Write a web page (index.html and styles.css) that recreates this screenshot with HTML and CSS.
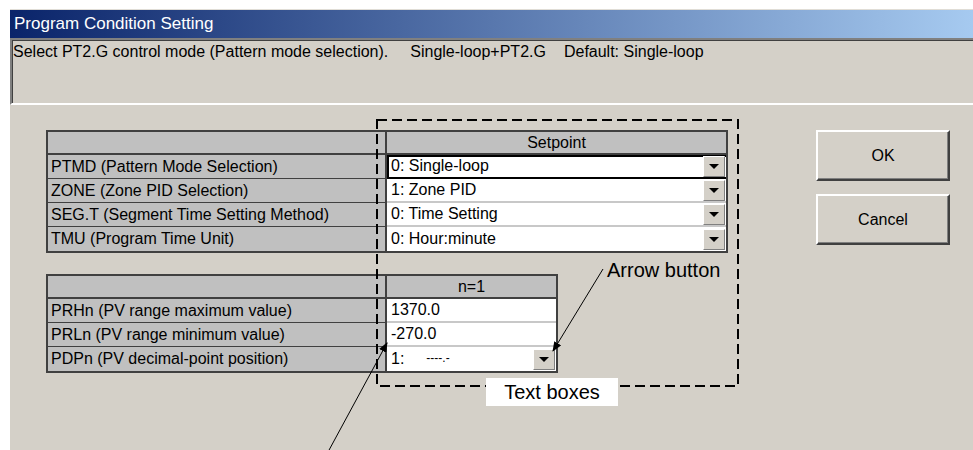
FILE: index.html
```html
<!DOCTYPE html>
<html>
<head>
<meta charset="utf-8">
<link rel="stylesheet" href="styles.css">
</head>
<body>
<div class="dialog">
  <div class="titlebar">Program Condition Setting</div>
  <div class="message"><span>Select PT2.G control mode (Pattern mode selection).</span><span class="m2">Single-loop+PT2.G</span><span class="m3">Default: Single-loop</span></div>
  <div class="content">
    <div class="tables">
      <div class="grid g1">
        <div class="cell head"></div>
        <div class="cell head center">Setpoint</div>
        <div class="cell label">PTMD (Pattern Mode Selection)</div>
        <div class="cell value focus"><span>0: Single-loop</span><span class="drop"><i class="tri"></i></span></div>
        <div class="cell label">ZONE (Zone PID Selection)</div>
        <div class="cell value"><span>1: Zone PID</span><span class="drop"><i class="tri"></i></span></div>
        <div class="cell label">SEG.T (Segment Time Setting Method)</div>
        <div class="cell value"><span>0: Time Setting</span><span class="drop"><i class="tri"></i></span></div>
        <div class="cell label last">TMU (Program Time Unit)</div>
        <div class="cell value last"><span>0: Hour:minute</span><span class="drop"><i class="tri"></i></span></div>
      </div>
      <div class="grid g2">
        <div class="cell head"></div>
        <div class="cell head center">n=1</div>
        <div class="cell label">PRHn (PV range maximum value)</div>
        <div class="cell value"><span>1370.0</span></div>
        <div class="cell label">PRLn (PV range minimum value)</div>
        <div class="cell value"><span>-270.0</span></div>
        <div class="cell label last">PDPn (PV decimal-point position)</div>
        <div class="cell value last"><span>1:<span class="dp">----.-</span></span><span class="drop"><i class="tri"></i></span></div>
      </div>
    </div>
    <div class="buttons">
      <div class="btn">OK</div>
      <div class="btn">Cancel</div>
    </div>
  </div>
</div>
<svg class="overlay" width="973" height="450" viewBox="0 0 973 450">
  <defs>
    <marker id="ah" markerWidth="10" markerHeight="8" refX="9" refY="4" orient="auto" markerUnits="userSpaceOnUse">
      <path d="M0,0 L10,4 L0,8 Z" fill="#000"/>
    </marker>
  </defs>
  <rect x="377" y="120" width="361" height="266" fill="none" stroke="#000" stroke-width="2" stroke-dasharray="10 5"/>
  <line x1="603" y1="269" x2="553" y2="351" stroke="#000" stroke-width="1" marker-end="url(#ah)"/>
  <line x1="328" y1="452" x2="387" y2="343" stroke="#000" stroke-width="1" marker-end="url(#ah)"/>
</svg>
<div class="note arrow-note">Arrow button</div>
<div class="note text-note">Text boxes</div>
</body>
</html>
```
FILE: styles.css
```css
html, body {
  margin: 0;
  padding: 0;
  background: #fff;
  width: 973px;
  height: 450px;
  overflow: hidden;
  font-family: "Liberation Sans", Arial, sans-serif;
}
.dialog {
  margin: 9px 0 0 10px;
  height: 441px;
  background: #d4d0c8;
  display: flex;
  flex-direction: column;
}
.titlebar {
  height: 28px;
  line-height: 28px;
  padding-left: 4px;
  color: #fff;
  font-size: 17px;
  background: linear-gradient(to right, #0a246a, #a6caf0);
  border-top: 1px solid #e0ddd6;
}
.message {
  height: 60px;
  border-top: 2px solid #808080;
  border-left: 2px solid #808080;
  border-bottom: 2px solid #fff;
  box-shadow: inset 1px 1px 0 #404040;
  padding: 3px 0 0 1px;
  font-size: 16px;
  color: #000;
  box-sizing: content-box;
}
.message .m2 { margin-left: 22px; }
.message .m3 { margin-left: 18px; }
.content {
  display: flex;
  padding: 25px 0 0 36px;
}
.tables {
  display: flex;
  flex-direction: column;
  gap: 21px;
  width: 770px;
}
.grid {
  display: grid;
  border: 2px solid #404040;
  font-size: 16px;
  color: #000;
}
.g1 { grid-template-columns: 339px 339px; width: 678px; }
.g2 { grid-template-columns: 339px 169px; width: 508px; }
.cell {
  box-sizing: border-box;
  height: 24px;
  border-bottom: 1px solid #404040;
  display: flex;
  align-items: center;
  justify-content: space-between;
  overflow: hidden;
  white-space: nowrap;
}
.cell.last { border-bottom: none; }
.head {
  height: 23px;
  background: #c0c0c0;
  border-bottom: 2px solid #404040;
}
.head:first-child { border-right: 2px solid #404040; }
.center { justify-content: center; }
.label {
  background: #c0c0c0;
  border-right: 2px solid #404040;
  padding-left: 3px;
}
.value {
  background: #fff;
  border-bottom: 2px solid #c8c8c8;
  padding-left: 4px;
}
.value.last { border-bottom: none; }
.value.focus {
  box-shadow: inset 2px 2px 0 #000;
  border-bottom: 2px solid #000;
}
.dp {
  margin-left: 22px;
  font-size: 12px;
  position: relative;
  top: -2px;
}
.drop {
  box-sizing: border-box;
  width: 22px;
  height: 21px;
  background: #d4d0c8;
  border-top: 1px solid #fff;
  border-left: 1px solid #fff;
  border-right: 1px solid #808080;
  border-bottom: 1px solid #808080;
  display: flex;
  align-items: center;
  justify-content: center;
  margin-right: 1px;
}
.tri {
  width: 0;
  height: 0;
  border-left: 5px solid transparent;
  border-right: 5px solid transparent;
  border-top: 5px solid #000;
}
.buttons {
  display: flex;
  flex-direction: column;
  gap: 13px;
}
.btn {
  width: 130px;
  height: 47px;
  border-top: 2px solid #fff;
  border-left: 2px solid #fff;
  border-right: 2px solid #404040;
  border-bottom: 2px solid #404040;
  box-shadow: inset -1px -1px 0 #808080;
  display: flex;
  align-items: center;
  justify-content: center;
  font-size: 16px;
  color: #000;
}
.overlay {
  position: absolute;
  left: 0;
  top: 0;
  pointer-events: none;
}
.note {
  position: absolute;
  font-family: "Liberation Sans", Arial, sans-serif;
  font-size: 20px;
  color: #000;
  line-height: 24px;
}
.arrow-note { left: 607px; top: 258px; }
.text-note {
  left: 486px;
  top: 378px;
  width: 132px;
  height: 28px;
  line-height: 28px;
  background: #fff;
  text-align: center;
}
```
